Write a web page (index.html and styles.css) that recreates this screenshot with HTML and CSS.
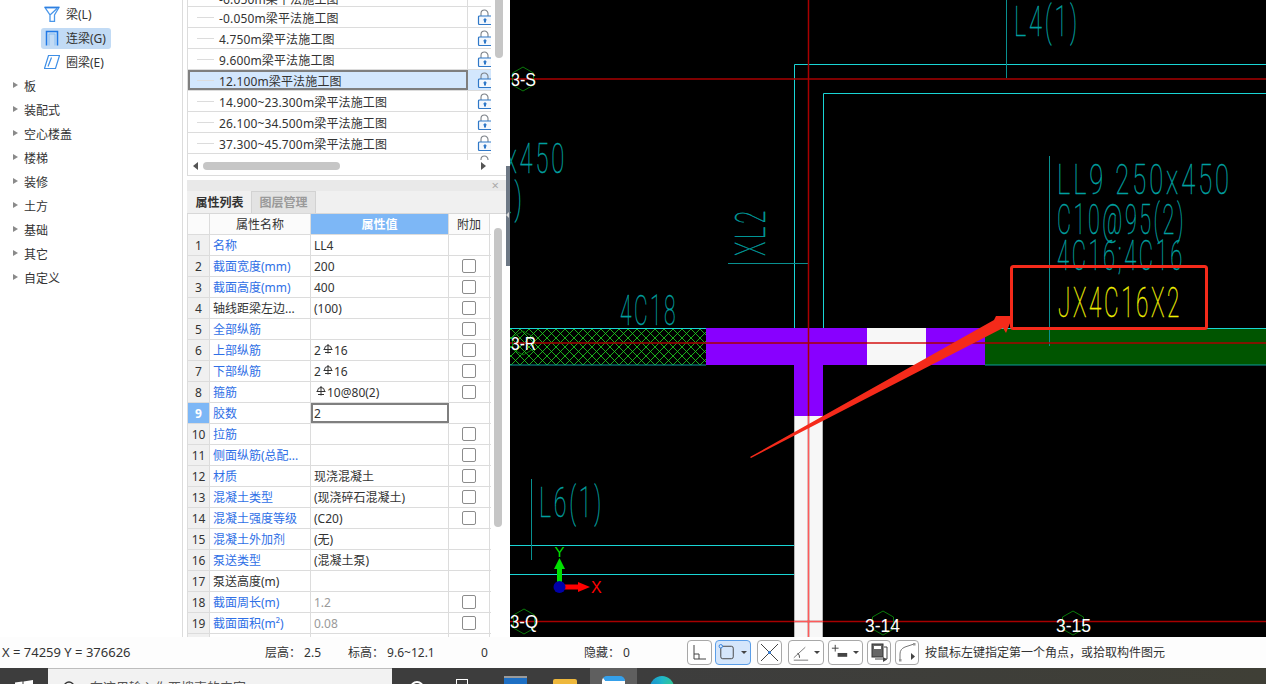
FILE: index.html
```html
<!DOCTYPE html>
<html lang="zh-CN">
<head>
<meta charset="utf-8">
<title>连梁属性</title>
<link rel="stylesheet" href="styles.css">
</head>
<body>
<svg class="defs" width="0" height="0" aria-hidden="true">
  <symbol id="lock" viewBox="0 0 16 16">
    <path d="M4 7V4.500a3.500 3.500 0 0 1 7 0V7" fill="none" stroke="#7d8288" stroke-width="1.100"/>
    <path d="M1.500 8a1 1 0 0 1 1-1H16v8.500H2.500a1 1 0 0 1-1-1z" fill="#f4f8fd" stroke="#2f78c8" stroke-width="1.200"/>
    <path d="M8 9l2.200 2.200H9V13.500H7V11.200H5.800z" fill="#2f78c8"/>
  </symbol>
  <symbol id="bar" viewBox="0 0 10 10">
    <path d="M1.500 5a3.500 3.500 0 0 1 7 0M0.500 5.500h9M5 0v9.500M2 8.500h6" fill="none" stroke="#333" stroke-width="1"/>
  </symbol>
</svg>
<div class="app">
  <div class="workspace">
    <nav class="tree">
      <div class="tree-leaf"><span class="leaf-chip"><svg class="leaf-icon" viewBox="0 0 16 16"><path d="M1 1.500h14L10.500 9v6.500H6V9z M6 9l7-6.500" fill="none" stroke="#4a97ea" stroke-width="1.300"/><path d="M1 1.500h14" stroke="#2f7fe0" stroke-width="1.500"/></svg><span class="leaf-text">梁(L)</span></span></div>
      <div class="tree-leaf"><span class="leaf-chip is-active"><svg class="leaf-icon" viewBox="0 0 16 16"><path d="M2.500 15.500V1.500h11v14" fill="none" stroke="#1f78e6" stroke-width="1.500"/><path d="M5 15.500V4h6v11.500" fill="none" stroke="#7db7f0" stroke-width="0.800"/></svg><span class="leaf-text">连梁(G)</span></span></div>
      <div class="tree-leaf"><span class="leaf-chip"><svg class="leaf-icon" viewBox="0 0 16 16"><path d="M4.500 1.500h11l-4 13H.5zM7.500 3.500L4 12.500" fill="none" stroke="#3f8fe6" stroke-width="1.200"/></svg><span class="leaf-text">圈梁(E)</span></span></div>
      <div class="tree-group">板</div>
      <div class="tree-group">装配式</div>
      <div class="tree-group">空心楼盖</div>
      <div class="tree-group">楼梯</div>
      <div class="tree-group">装修</div>
      <div class="tree-group">土方</div>
      <div class="tree-group">基础</div>
      <div class="tree-group">其它</div>
      <div class="tree-group">自定义</div>
    </nav>

    <div class="panels">
      <section class="drawings">
        <div class="drawing-rows">
          <div class="drawing is-cut"><span class="drawing-name">-6.050m梁平法施工图</span><svg class="lock"><use href="#lock"/></svg></div>
          <div class="drawing"><span class="drawing-name">-0.050m梁平法施工图</span><svg class="lock"><use href="#lock"/></svg></div>
          <div class="drawing"><span class="drawing-name">4.750m梁平法施工图</span><svg class="lock"><use href="#lock"/></svg></div>
          <div class="drawing"><span class="drawing-name">9.600m梁平法施工图</span><svg class="lock"><use href="#lock"/></svg></div>
          <div class="drawing is-selected"><span class="drawing-name">12.100m梁平法施工图</span><svg class="lock"><use href="#lock"/></svg></div>
          <div class="drawing"><span class="drawing-name">14.900~23.300m梁平法施工图</span><svg class="lock"><use href="#lock"/></svg></div>
          <div class="drawing"><span class="drawing-name">26.100~34.500m梁平法施工图</span><svg class="lock"><use href="#lock"/></svg></div>
          <div class="drawing"><span class="drawing-name">37.300~45.700m梁平法施工图</span><svg class="lock"><use href="#lock"/></svg></div>
          <div class="drawing is-tail"><span class="drawing-name"></span><svg class="lock"><use href="#lock"/></svg></div>
        </div>
        <div class="vbar-top"></div>
        <div class="hscroll"><span class="arrow-l"></span><span class="hthumb"></span><span class="arrow-r"></span></div>
      </section>

      <section class="props">
        <div class="props-title"><span class="close">×</span></div>
        <div class="tabs"><span class="tab is-on">属性列表</span><span class="tab">图层管理</span></div>
        <div class="props-body">
          <div class="table">
            <div class="row head"><span class="c-no"></span><span class="c-name">属性名称</span><span class="c-val">属性值</span><span class="c-add">附加</span></div>
            <div class="row"><span class="c-no">1</span><span class="c-name link">名称</span><span class="c-val">LL4</span><span class="c-add"></span></div>
            <div class="row"><span class="c-no">2</span><span class="c-name link">截面宽度(mm)</span><span class="c-val">200</span><span class="c-add"><i class="check"></i></span></div>
            <div class="row"><span class="c-no">3</span><span class="c-name link">截面高度(mm)</span><span class="c-val">400</span><span class="c-add"><i class="check"></i></span></div>
            <div class="row"><span class="c-no">4</span><span class="c-name">轴线距梁左边...</span><span class="c-val">(100)</span><span class="c-add"><i class="check"></i></span></div>
            <div class="row"><span class="c-no">5</span><span class="c-name link">全部纵筋</span><span class="c-val"></span><span class="c-add"><i class="check"></i></span></div>
            <div class="row"><span class="c-no">6</span><span class="c-name link">上部纵筋</span><span class="c-val">2<svg class="rebar"><use href="#bar"/></svg>16</span><span class="c-add"><i class="check"></i></span></div>
            <div class="row"><span class="c-no">7</span><span class="c-name link">下部纵筋</span><span class="c-val">2<svg class="rebar"><use href="#bar"/></svg>16</span><span class="c-add"><i class="check"></i></span></div>
            <div class="row"><span class="c-no">8</span><span class="c-name link">箍筋</span><span class="c-val"><svg class="rebar"><use href="#bar"/></svg>10@80(2)</span><span class="c-add"><i class="check"></i></span></div>
            <div class="row is-editing"><span class="c-no">9</span><span class="c-name link">胶数</span><span class="c-val">2</span><span class="c-add"></span></div>
            <div class="row"><span class="c-no">10</span><span class="c-name link">拉筋</span><span class="c-val"></span><span class="c-add"><i class="check"></i></span></div>
            <div class="row"><span class="c-no">11</span><span class="c-name link">侧面纵筋(总配...</span><span class="c-val"></span><span class="c-add"><i class="check"></i></span></div>
            <div class="row"><span class="c-no">12</span><span class="c-name link">材质</span><span class="c-val">现浇混凝土</span><span class="c-add"><i class="check"></i></span></div>
            <div class="row"><span class="c-no">13</span><span class="c-name link">混凝土类型</span><span class="c-val">(现浇碎石混凝土)</span><span class="c-add"><i class="check"></i></span></div>
            <div class="row"><span class="c-no">14</span><span class="c-name link">混凝土强度等级</span><span class="c-val">(C20)</span><span class="c-add"><i class="check"></i></span></div>
            <div class="row"><span class="c-no">15</span><span class="c-name link">混凝土外加剂</span><span class="c-val">(无)</span><span class="c-add"></span></div>
            <div class="row"><span class="c-no">16</span><span class="c-name link">泵送类型</span><span class="c-val">(混凝土泵)</span><span class="c-add"></span></div>
            <div class="row"><span class="c-no">17</span><span class="c-name">泵送高度(m)</span><span class="c-val"></span><span class="c-add"></span></div>
            <div class="row"><span class="c-no">18</span><span class="c-name link">截面周长(m)</span><span class="c-val muted">1.2</span><span class="c-add"><i class="check"></i></span></div>
            <div class="row"><span class="c-no">19</span><span class="c-name link">截面面积(m²)</span><span class="c-val muted">0.08</span><span class="c-add"><i class="check"></i></span></div>
            <div class="row"><span class="c-no"></span><span class="c-name"></span><span class="c-val"></span><span class="c-add"></span></div>
          </div>
          <div class="vbar"><span class="vthumb"></span></div>
        </div>
      </section>
    </div>

    <div class="splitter"><span class="splitter-grip"></span></div>

    <svg class="cad" viewBox="510 0 756 637" width="756" height="637">
      <defs>
        <pattern id="hatch" width="9" height="9" patternUnits="userSpaceOnUse" x="511" y="329">
          <path d="M0 0L9 9M9 0L0 9" stroke="#22d822" stroke-width="0.8"/>
        </pattern>
      </defs>
      <rect x="510" y="0" width="756" height="637" fill="#000"/>

      <rect x="510" y="329" width="196" height="36" fill="url(#hatch)"/>
      <rect x="706" y="328" width="161" height="37" fill="#8800ff"/>
      <rect x="867" y="328" width="59" height="37" fill="#f7f7f7"/>
      <rect x="926" y="328" width="59" height="37" fill="#8800ff"/>
      <rect x="985" y="328" width="281" height="37" fill="#005500"/>
      <rect x="794" y="365" width="29" height="51" fill="#8800ff"/>
      <rect x="794" y="416" width="29" height="221" fill="#f7f7f7"/>
      <path d="M794.500 416V637M822.500 416V637" stroke="#b5b5b5"/>

      <g class="cyan">
        <path d="M794.500 328V64.500H1266M823.500 328V93.500H1266"/>
        <path d="M510 545.500H794M510 574.500H794"/>
        <path d="M510 328.500H706M985 328.500H1266" />
        <path d="M510 365H706M985 365H1266" class="cyan-dim"/>
      </g>

      <g class="teal-line">
        <path d="M1006.500 0V78M1049.500 156V346M531.500 479V560M728 263.500H808"/>
      </g>

      <g class="red">
        <path d="M510 79H1266M510 343H1266M510 621.500H1266M808.500 0V637"/>
      </g>
      <path d="M808.500 416V637M794 621.500H823M867 343H926" stroke="#ff5a5a" fill="none"/>

      <g class="hex">
        <path d="M523 67l10.500 6v12l-10.500 6-10.500-6V73z"/>
        <path d="M523 331l10.500 6v12l-10.500 6-10.500-6V337z"/>
        <path d="M524 609l10.500 6v13l-10.500 6-10.500-6V615z"/>
        <path d="M883 611l10.500 6v12l-10.500 6-10.500-6V617z"/>
        <path d="M1073 611l10.500 6v12l-10.500 6-10.500-6V617z"/>
      </g>
      <g class="axis-label">
        <text x="511" y="86" textLength="25" lengthAdjust="spacingAndGlyphs">3-S</text>
        <text x="511" y="350" textLength="25" lengthAdjust="spacingAndGlyphs">3-R</text>
        <text x="510" y="628" textLength="28" lengthAdjust="spacingAndGlyphs">3-Q</text>
        <text x="865" y="632" textLength="35" lengthAdjust="spacingAndGlyphs">3-14</text>
        <text x="1056" y="632" textLength="35" lengthAdjust="spacingAndGlyphs">3-15</text>
      </g>

      <g class="cad-text">
        <text x="1014" y="36" textLength="66" lengthAdjust="spacingAndGlyphs">L4(1)</text>
        <text x="458" y="173" textLength="109" lengthAdjust="spacingAndGlyphs">250x450</text>
        <text x="488" y="213" textLength="37" lengthAdjust="spacingAndGlyphs">(2)</text>
        <text x="620" y="325" textLength="58" lengthAdjust="spacingAndGlyphs">4C18</text>
        <text x="539" y="517" textLength="65" lengthAdjust="spacingAndGlyphs">L6(1)</text>
        <text transform="translate(765 256) rotate(-90)" textLength="48" lengthAdjust="spacingAndGlyphs">XL2</text>
        <text x="1057" y="194" textLength="175" lengthAdjust="spacingAndGlyphs">LL9 250x450</text>
        <text x="1057" y="234" textLength="129" lengthAdjust="spacingAndGlyphs">C10@95(2)</text>
        <text x="1057" y="270" textLength="128" lengthAdjust="spacingAndGlyphs">4C16;4C16</text>
      </g>
      <text class="cad-text-yellow" x="1058" y="317" textLength="124" lengthAdjust="spacingAndGlyphs">JX4C16X2</text>

      <path d="M559.500 587V566" stroke="#00e000" stroke-width="5"/>
      <path d="M559.500 558l5.500 11h-11z" fill="#00e000"/>
      <path d="M559.500 587H580" stroke="#f00" stroke-width="5"/>
      <path d="M590 587l-12 5v-10z" fill="#f00"/>
      <circle cx="559.500" cy="587" r="6" fill="#0000a8"/>
      <text class="axis-y" x="554.500" y="557">Y</text>
      <text class="axis-x" x="591" y="593">X</text>

      <rect class="callout" x="1011.500" y="266.500" width="195" height="62" rx="2"/>
      <path class="arrow" d="M750 457L994 320 996 316 1013 316 1006 333 1003 328 751 458z"/>
    </svg>
  </div>

  <footer class="status">
    <span class="coords">X = 74259 Y = 376626</span>
    <span class="stat stat-floor">层高：&nbsp;2.5</span>
    <span class="stat stat-level">标高：&nbsp;9.6~12.1</span>
    <span class="stat stat-zero">0</span>
    <span class="stat stat-hidden">隐藏：&nbsp;0</span>
    <div class="tools">
      <button class="tool"><svg viewBox="0 0 23 23"><path d="M6 4v14h12M6 13h5v5" fill="none" stroke="#444"/></svg></button>
      <button class="tool tool-wide is-on"><svg viewBox="0 0 24 23"><rect x="5" y="5" width="13" height="13" rx="2" fill="none" stroke="#444"/><circle cx="5" cy="5" r="1.800" fill="#d8e8fb" stroke="#2f7fe0"/></svg><i class="caret"></i></button>
      <button class="tool"><svg viewBox="0 0 23 23"><path d="M3 3l17 17M20 3L3 20" stroke="#444" fill="none"/><circle cx="11.500" cy="11.500" r="1.500" fill="#2f7fe0"/></svg></button>
      <button class="tool tool-wide"><svg viewBox="0 0 24 23"><path d="M5 17L17 6M5 19.500h15" stroke="#777" fill="none"/><path d="M11 17a6 6 0 0 0-2-5" stroke="#444" fill="none"/></svg><i class="caret"></i></button>
      <button class="tool tool-five"><svg viewBox="0 0 24 23"><path d="M3 7h7M6.500 3.500v7" stroke="#444" fill="none"/><rect x="9" y="12" width="10" height="4" fill="#444"/></svg><i class="caret"></i></button>
      <button class="tool tool-small"><svg viewBox="0 0 23 23"><rect x="4" y="3" width="11" height="13" fill="#666" stroke="#333"/><rect x="6" y="5" width="7" height="3" fill="#fff"/><path d="M16 6h3v12H7" fill="none" stroke="#444"/><path d="M15 16l4 2.500-4 2.500z" fill="#444"/></svg></button>
      <button class="tool tool-small"><svg viewBox="0 0 23 23"><path d="M4 19v-6q0-5 5-7l9-3" fill="none" stroke="#777"/><rect x="3" y="18" width="2.500" height="2.500" fill="#999"/><rect x="17" y="2" width="2.500" height="2.500" fill="#999"/><path d="M15 12v7l4-3.500z" fill="#444"/></svg></button>
    </div>
    <span class="hint">按鼠标左键指定第一个角点，或拾取构件图元</span>
  </footer>

  <div class="taskbar">
    <svg class="win" viewBox="0 0 18 16"><path d="M0 2.500l7.500-1V7.500H0zM8.500 1.400L18 0V7.500H8.500zM0 8.500h7.500v6L0 13.500zM8.500 8.500H18V16l-9.500-1.300z" fill="#fff"/></svg>
    <div class="search"><svg class="search-icon" viewBox="0 0 14 14"><circle cx="6" cy="6" r="5" fill="none" stroke="#333" stroke-width="1.300"/></svg><span class="search-text">在这里输入你要搜索的内容</span></div>
    <span class="task task-cortana"></span>
    <span class="task task-view"></span>
    <span class="task task-store"></span>
    <span class="task task-folder"></span>
    <span class="task task-current"><span class="current-icon"></span></span>
    <span class="task task-edge"></span>
  </div>
</div>
</body>
</html>
```

FILE: styles.css
```css
* { box-sizing: border-box; }
html, body { margin: 0; padding: 0; height: 100%; overflow: hidden; background: #fff; }
body { font: 12px/1 "Noto Sans", "Noto Sans CJK SC", sans-serif; color: #333; }
.defs { display: block; height: 0; }
.app { display: flex; flex-direction: column; width: 1266px; height: 684px; overflow: hidden; }
.workspace { display: flex; height: 637px; flex: none; }

/* tree */
.tree { width: 187px; flex: none; padding-top: 2px; background: linear-gradient(90deg, #fff 182px, #dcdcdc 182px, #dcdcdc 183px, #fff 183px); }
.tree-leaf { height: 24px; padding-left: 41px; display: flex; align-items: center; }
.leaf-chip { display: inline-flex; align-items: center; height: 21px; width: 70px; padding-left: 3px; gap: 6px; border-radius: 3px; }
.leaf-chip.is-active { background: #c2dbf5; }
.leaf-icon { width: 16px; height: 16px; flex: none; }
.leaf-text { padding-top: 1px; }
.tree-group { height: 24px; padding: 2px 0 0 24px; display: flex; align-items: center; position: relative; }
.tree-group::before { content: ""; position: absolute; left: 13px; top: 8px; border-left: 5px solid #8a8a8a; border-top: 3.5px solid transparent; border-bottom: 3.5px solid transparent; }

/* panels */
.panels { width: 319px; flex: none; display: flex; flex-direction: column; }
.drawings { height: 176px; flex: none; position: relative; border-left: 1px solid #dcdcdc; border-bottom: 1px solid #dcdcdc; margin-bottom: 4px; overflow: hidden; }
.drawing-rows { height: 160px; overflow: hidden; width: 303px; }
.drawing { height: 21px; display: flex; align-items: center; border-bottom: 1px solid #dcdcdc; position: relative; }
.drawing-name { flex: 0 0 280px; height: 100%; display: flex; align-items: center; padding: 4px 0 0 31px; border-right: 1px solid #dcdcdc; white-space: nowrap; letter-spacing: .15px; }
.drawing.is-cut { height: 7px; }
.drawing.is-cut .drawing-name { padding: 0 0 0 31px; align-items: flex-end; overflow: hidden; }
.drawing.is-tail { border-bottom: 0; height: 6px; align-items: flex-start; overflow: hidden; }
.drawing::before { content: ""; position: absolute; left: 9px; top: 10px; width: 17px; border-top: 1px solid #dcdcdc; }
.drawing.is-cut::before, .drawing.is-tail::before { display: none; }
.drawing.is-selected { background: #d3e7fd; }
.drawing.is-selected .drawing-name { border-right: 0; outline: 2px solid #7f7f7f; outline-offset: -2px; }
.lock { width: 16px; height: 16px; flex: none; margin-left: 9px; }
.drawing.is-cut .lock { margin-top: -24px; }
.drawing.is-tail .lock { margin-top: 1px; }
.vbar-top { position: absolute; left: 307px; top: -8px; width: 8px; height: 66px; border-radius: 4px; background: #c6c6c6; }
.hscroll { display: flex; align-items: center; height: 12px; padding-left: 5px; position: relative; }
.arrow-l { border-right: 5px solid #555; border-top: 4px solid transparent; border-bottom: 4px solid transparent; }
.hthumb { width: 137px; height: 8px; border-radius: 4px; background: #c6c6c6; margin-left: 5px; }
.arrow-r { position: absolute; left: 293px; border-left: 5px solid #555; border-top: 4px solid transparent; border-bottom: 4px solid transparent; }

.props { flex: 1; min-height: 0; display: flex; flex-direction: column; overflow: hidden; }
.props-title { height: 11px; flex: none; background: #e9e9e9; position: relative; }
.close { position: absolute; right: 7px; top: -1px; font-size: 13px; color: #aaa; }
.tabs { height: 23px; flex: none; display: flex; background: #f0f0f0; border-bottom: 1px solid #d8d8d8; padding-left: 1px; }
.tab { width: 65px; margin-left: -1px; padding-top: 1px; display: flex; align-items: center; justify-content: center; font-weight: 700; color: #9a9a9a; background: #e3e3e3; border: 1px solid #d2d2d2; border-bottom: 0; }
.tab.is-on { color: #333; background: #f0f0f0; border-color: transparent; }
.props-body { flex: 1; min-height: 0; display: flex; }
.table { width: 304px; flex: none; border-left: 1px solid #dcdcdc; }
.row { display: grid; grid-template-columns: 22px 101px 138px 41px; height: 21px; align-items: stretch; border-bottom: 1px solid #dcdcdc; }
.row > span { display: flex; align-items: center; padding-top: 2px; border-right: 1px solid #dcdcdc; white-space: nowrap; overflow: hidden; }
.c-no { justify-content: center; background: #f0f0f0; }
.row > .c-name { padding-left: 3px; }
.row > .c-val { padding-left: 3px; }
.c-add { justify-content: center; }
.row > .c-add { padding-top: 0; }
.head > .c-add { padding-top: 2px; }
.link { color: #2f6fe6; }
.muted { color: #9a9a9a; }
.head > span { justify-content: center; background: #fbfbfb; }
.head > .c-val { background: #7db7f6; color: #fff; font-weight: 700; padding-left: 0; }
.head > .c-name { padding-left: 0; }
.check { display: block; width: 14px; height: 14px; border: 1px solid #8c8c8c; border-radius: 2px; background: #fff; }
.rebar { width: 10px; height: 10px; margin: -4px 1px 0 2px; flex: none; }
.is-editing .c-no { background: #7db7f6; color: #fff; font-weight: 700; }
.is-editing .c-val { outline: 2px solid #7f7f7f; outline-offset: -2px; }
.vbar { flex: 1; position: relative; }
.vthumb { position: absolute; left: 3px; top: 14px; width: 8px; height: 299px; border-radius: 4px; background: #c6c6c6; }

.splitter { width: 4px; flex: none; position: relative; background: #fff; }
.splitter-grip { position: absolute; left: 0; top: 166px; width: 4px; height: 100px; background: #6d7885; }
.splitter-grip::after { content: ""; position: absolute; left: 0; top: 46px; border-right: 3px solid #d8d8d8; border-top: 3px solid transparent; border-bottom: 3px solid transparent; }

/* CAD */
.cad { display: block; flex: none; }
.cyan path { fill: none; stroke: #19d5d5; }
.cyan .cyan-dim { stroke: #0d9c9c; }
.teal-line path { fill: none; stroke: #089090; }
.red path { fill: none; stroke: #a80000; stroke-width: 1.500; }
.hex path { fill: none; stroke: #0a7a0a; }
.axis-label text { font: 400 19px "Liberation Sans", sans-serif; fill: #fff; }
.cad-text text { font: 100 43px "Roboto", sans-serif; letter-spacing: 5px; fill: #00a0a0; stroke: #00a0a0; stroke-width: .4px; }
.cad-text-yellow { font: 100 43px "Roboto", sans-serif; letter-spacing: 5px; fill: #f2f200; stroke: #f2f200; stroke-width: .4px; }
.axis-y { font: 400 15px "Liberation Sans", sans-serif; fill: #00e000; }
.axis-x { font: 400 16px "Liberation Sans", sans-serif; fill: #f00; }
.callout { fill: none; stroke: #f52a1a; stroke-width: 3; }
.arrow { fill: #f52a1a; }

/* status */
.status { height: 31px; flex: none; display: flex; align-items: center; background: #fdfdfd; position: relative; }
.coords { position: absolute; left: 2px; white-space: nowrap; font-size: 13px; }
.stat { position: absolute; white-space: nowrap; }
.stat-floor { left: 265px; }
.stat-level { left: 348px; }
.stat-zero { left: 481px; }
.stat-hidden { left: 584px; }
.tools { position: absolute; left: 687px; top: 3px; display: flex; gap: 4px; }
.tool { width: 25px; height: 25px; padding: 0; background: #fff; border: 1px solid #a8a8a8; border-radius: 4px; display: flex; align-items: center; position: relative; }
.tool svg { width: 23px; height: 23px; flex: none; }
.tool:nth-child(2) { margin-left: -1px; }
.tool:nth-child(3), .tool:nth-child(4) { margin-left: 2px; }
.tool-wide { width: 36px; }
.tool-five { width: 35px; }
.tool-small { width: 24px; }
.tool.is-on { background: #d5e6fb; border-color: #5b9ee8; }
.caret { position: absolute; right: 3px; top: 10px; border-top: 3.500px solid #444; border-left: 3px solid transparent; border-right: 3px solid transparent; }
.hint { position: absolute; left: 925px; white-space: nowrap; }

/* taskbar */
.taskbar { height: 16px; flex: none; display: flex; position: relative; background: linear-gradient(90deg, #3d3d3d, #3d3d3d 640px, #3f3f36); overflow: hidden; }
.win { position: absolute; left: 15px; top: 12px; width: 18px; height: 16px; }
.search { position: absolute; left: 48px; top: 0; width: 344px; height: 16px; background: #f2f2f2; border-top: 1px solid #bdbdbd; }
.search-icon { position: absolute; left: 15px; top: 12px; width: 14px; height: 14px; }
.search-text { position: absolute; left: 42px; top: 12px; font-size: 13px; color: #555; white-space: nowrap; }
.task { position: absolute; top: 0; height: 16px; }
.task-cortana { left: 410px; top: 13px; width: 14px; height: 14px; border: 2px solid #fff; border-radius: 50%; }
.task-view { left: 456px; top: 11px; width: 12px; height: 12px; border: 1px solid #fff; }
.task-store { left: 504px; top: 8px; width: 23px; height: 20px; background: #1d6fc4; border-top: 2px solid #9a9a9a; }
.task-folder { left: 553px; top: 11px; width: 24px; height: 16px; background: #eeb83c; border-radius: 2px 2px 0 0; }
.task-current { left: 590px; width: 47px; background: #5f5f5f; }
.current-icon { position: absolute; left: 12px; top: 8px; width: 23px; height: 18px; border-radius: 5px 5px 0 0; background: #fff; border-top: 5px solid #35a0ea; border-left: 3px solid #fff; }
.task-edge { left: 650px; top: 8px; width: 24px; height: 24px; border-radius: 50%; background: conic-gradient(#1fb7c9, #3bd07a, #1a7fd0, #1fb7c9); }
```
